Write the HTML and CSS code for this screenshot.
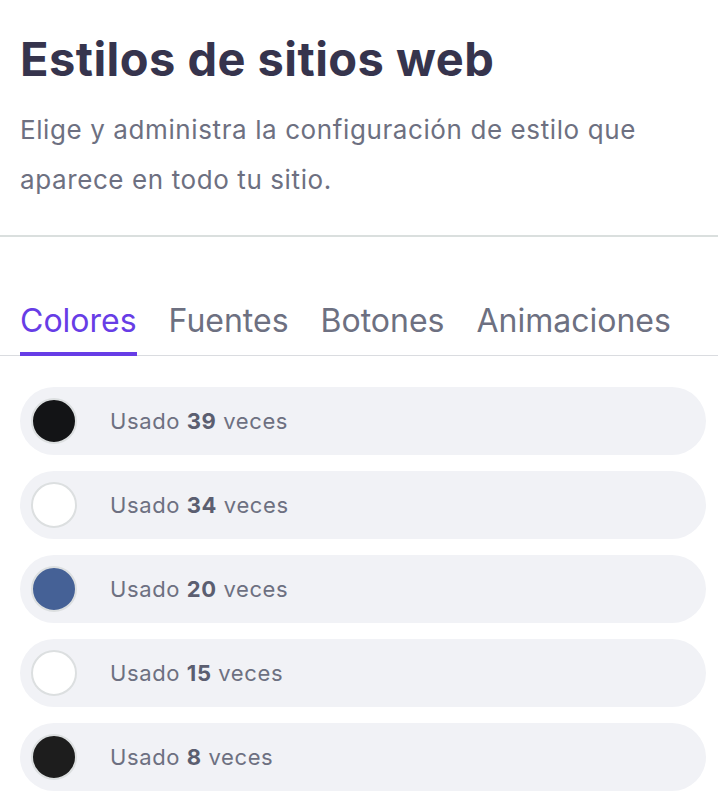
FILE: index.html
```html
<!DOCTYPE html>
<html lang="es">
  <head>
    <meta charset="UTF-8" />
    <meta name="viewport" content="width=device-width, initial-scale=1.0" />
    <title>Estilos de sitios web</title>
    <link rel="stylesheet" href="styles.css">
  </head>
  <body>
    <header class="cabecera">
      <h1>Estilos de sitios web</h1>
      <p>Elige y administra la configuración de estilo que aparece en todo tu sitio.</p>
    </header>

    <nav class="pestanas">
      <a class="pestana activa">Colores</a>
      <a class="pestana">Fuentes</a>
      <a class="pestana">Botones</a>
      <a class="pestana">Animaciones</a>
    </nav>

    <ul class="colores">
      <li class="color">
        <span class="muestra" style="background-color: #131416"></span>
        <span class="uso">Usado <b>39</b> veces</span>
      </li>
      <li class="color">
        <span class="muestra" style="background-color: #ffffff"></span>
        <span class="uso">Usado <b>34</b> veces</span>
      </li>
      <li class="color">
        <span class="muestra" style="background-color: #456196"></span>
        <span class="uso">Usado <b>20</b> veces</span>
      </li>
      <li class="color">
        <span class="muestra" style="background-color: #ffffff"></span>
        <span class="uso">Usado <b>15</b> veces</span>
      </li>
      <li class="color">
        <span class="muestra" style="background-color: #1d1d1d"></span>
        <span class="uso">Usado <b>8</b> veces</span>
      </li>
    </ul>
  </body>
</html>
```

FILE: styles.css
```css
* {
  margin: 0;
  padding: 0;
  box-sizing: border-box;
  font-family: Inter, "Noto Sans", sans-serif;
}

body {
  background-color: #ffffff;
  color: #36344d;
  width: 718px;
}

.cabecera {
  padding: 31px 20px 30px;
  border-bottom: 2px solid #dadfde;
}

.cabecera h1 {
  font-size: 47px;
  line-height: 56px;
  font-weight: 700;
  color: #36344d;
  letter-spacing: 0.45px;
  margin-bottom: 18px;
}

.cabecera p {
  font-size: 26px;
  line-height: 50px;
  letter-spacing: 0.6px;
  color: #6d7081;
  max-width: 660px;
}

.pestanas {
  display: flex;
  gap: 32px;
  padding: 0 20px;
  margin-top: 64px;
  border-bottom: 1px solid #dadce0;
}

.pestana {
  font-size: 32px;
  line-height: 40px;
  color: #6d7081;
  padding-bottom: 11px;
  border-bottom: 4px solid transparent;
  margin-bottom: -1px;
}

.pestana.activa {
  color: #673de6;
  border-bottom-color: #673de6;
}

.colores {
  list-style: none;
  padding: 31px 12px 0 20px;
  display: flex;
  flex-direction: column;
  gap: 16px;
}

.color {
  height: 68px;
  border-radius: 34px;
  background-color: #f1f2f6;
  display: flex;
  align-items: center;
  padding-left: 11px;
}

.muestra {
  width: 46px;
  height: 46px;
  border-radius: 50%;
  border: 2px solid #dcdfe0;
  flex-shrink: 0;
}

.uso {
  margin-left: 33px;
  font-size: 22px;
  letter-spacing: 0.6px;
  color: #6d7081;
}

.uso b {
  font-weight: 700;
  color: #5b5e70;
}
```
